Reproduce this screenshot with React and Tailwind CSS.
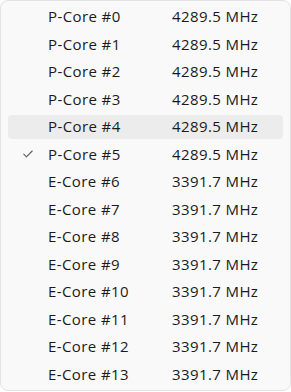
const cores = [
  { name: 'P-Core #0', mhz: '4289.5 MHz' },
  { name: 'P-Core #1', mhz: '4289.5 MHz' },
  { name: 'P-Core #2', mhz: '4289.5 MHz' },
  { name: 'P-Core #3', mhz: '4289.5 MHz' },
  { name: 'P-Core #4', mhz: '4289.5 MHz', hover: true },
  { name: 'P-Core #5', mhz: '4289.5 MHz', checked: true },
  { name: 'E-Core #6', mhz: '3391.7 MHz' },
  { name: 'E-Core #7', mhz: '3391.7 MHz' },
  { name: 'E-Core #8', mhz: '3391.7 MHz' },
  { name: 'E-Core #9', mhz: '3391.7 MHz' },
  { name: 'E-Core #10', mhz: '3391.7 MHz' },
  { name: 'E-Core #11', mhz: '3391.7 MHz' },
  { name: 'E-Core #12', mhz: '3391.7 MHz' },
  { name: 'E-Core #13', mhz: '3391.7 MHz' },
]

function CheckMark() {
  return (
    <svg width="10" height="8" viewBox="0 0 10 8" fill="none">
      <path d="M0.8 4.2L3.4 6.8L9.2 1" stroke="#5f5f5f" strokeWidth="1.1" strokeLinecap="round" strokeLinejoin="round" />
    </svg>
  )
}

export default function App() {
  return (
    <div className="w-[291px] h-[392px] bg-white">
      <div
        className="w-[291px] h-[391px] bg-[#f9f9f9] border border-[#e3e3e3] rounded-[8px] pt-[2px] text-[15px] tracking-[0.4px] text-[#1b1b1b]"
        style={{ fontFamily: '"Open Sans", "Noto Sans", sans-serif' }}
      >
        {cores.map((c) => (
          <div key={c.name} className="h-[27.5px] flex items-center">
            <div
              className={`mx-[7px] w-full h-[24px] flex items-center rounded-[4px] ${c.hover ? 'bg-[#ececec]' : ''}`}
            >
              <div className="w-[40px] flex items-center justify-center">
                {c.checked && <CheckMark />}
              </div>
              <span className="w-[124px] leading-none">{c.name}</span>
              <span className="leading-none">{c.mhz}</span>
            </div>
          </div>
        ))}
      </div>
    </div>
  )
}
